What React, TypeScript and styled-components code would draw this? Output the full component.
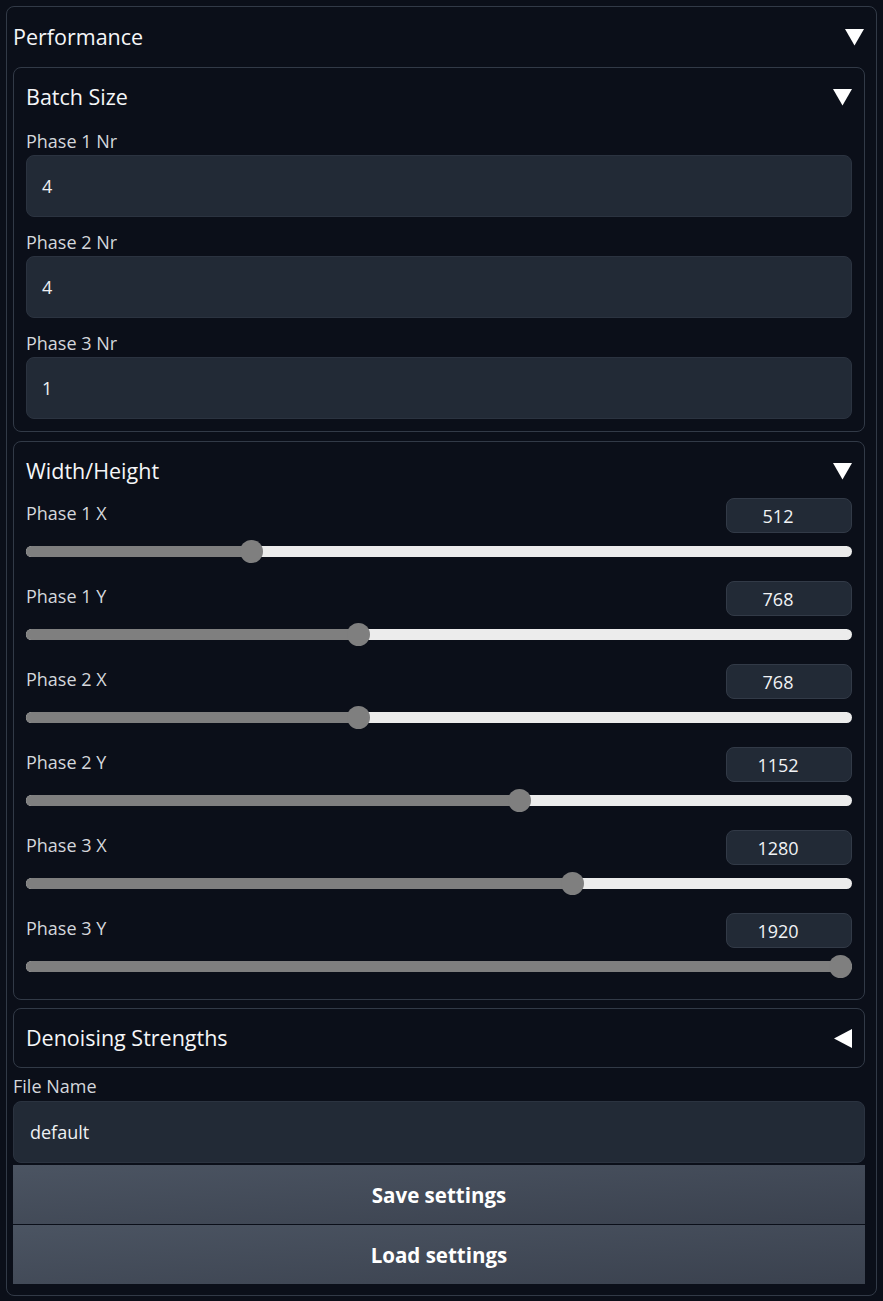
import React from "react";
import styled, { createGlobalStyle } from "styled-components";

const Global = createGlobalStyle`
  html, body { margin: 0; padding: 0; background: #0b0f19; }
  body { font-family: "Open Sans", "Noto Sans", sans-serif; color: #f3f4f6; }
  * { box-sizing: border-box; }
`;

const Page = styled.div`
  padding: 6px;
  width: 883px;
  height: 1301px;
  background: #0b0f19;
`;

const Outer = styled.div`
  border: 1px solid #323a47;
  border-radius: 8px;
  padding: 0 11px 11px 6px;
  display: flex;
  flex-direction: column;
`;

const OuterHeader = styled.div`
  height: 60px;
  display: flex;
  align-items: center;
  justify-content: space-between;
  padding-right: 1px;
`;

const Title = styled.span`
  font-size: 21.5px;
  line-height: 30px;
  color: #f5f6f8;
`;

const Block = styled.div<{ $padBottom?: number; $mt?: number }>`
  border: 1px solid #323a47;
  border-radius: 8px;
  padding: 12px 12px ${(p) => p.$padBottom ?? 12}px 12px;
  margin-top: ${(p) => p.$mt ?? 0}px;
  display: flex;
  flex-direction: column;
`;

const BlockHeader = styled.div<{ $mb?: number }>`
  height: 34px;
  display: flex;
  align-items: center;
  justify-content: space-between;
  margin-bottom: ${(p) => p.$mb ?? 0}px;
`;

const Field = styled.div<{ $mt?: number }>`
  display: flex;
  flex-direction: column;
  gap: 2px;
  margin-top: ${(p) => p.$mt ?? 0}px;
`;

const Label = styled.span`
  font-size: 18px;
  line-height: 24px;
  color: #d4d7dc;
`;

const TextBox = styled.div<{ $pad?: number }>`
  height: 62px;
  border-radius: 8px;
  background: #222a36;
  border: 1px solid #2b3340;
  display: flex;
  align-items: center;
  padding-left: ${(p) => p.$pad ?? 15}px;
  font-size: 18px;
  color: #eef0f3;
`;

const SliderRow = styled.div<{ $mt?: number }>`
  display: flex;
  flex-direction: column;
  margin-top: ${(p) => p.$mt ?? 0}px;
`;

const SliderHead = styled.div`
  height: 35px;
  display: flex;
  align-items: center;
  justify-content: space-between;
`;

const SliderLabel = styled(Label)`
  margin-top: -5px;
`;

const NumBox = styled.div`
  width: 126px;
  height: 35px;
  border-radius: 8px;
  background: #222a36;
  border: 1px solid #323a47;
  display: flex;
  align-items: center;
  justify-content: center;
  padding-right: 22px;
  font-size: 18px;
  color: #f1f3f5;
`;

const Track = styled.div`
  position: relative;
  height: 24px;
  margin-top: 6px;
  display: flex;
  align-items: center;
`;

const Rail = styled.div`
  position: relative;
  width: 100%;
  height: 11px;
  border-radius: 6px;
  background: #ececec;
  overflow: hidden;
`;

const Fill = styled.div`
  position: absolute;
  left: 0;
  top: 0;
  bottom: 0;
  background: #7f7f7f;
`;

const Thumb = styled.div`
  position: absolute;
  top: 0.5px;
  width: 23px;
  height: 23px;
  border-radius: 50%;
  background: #7f7f7f;
`;

const FileLabel = styled(Label)`
  margin-top: 6px;
`;

const FileField = styled.div`
  display: flex;
  flex-direction: column;
  gap: 3px;
`;

const Buttons = styled.div`
  margin-top: 2px;
  display: flex;
  flex-direction: column;
  gap: 1px;
`;

const Button = styled.button`
  height: 59px;
  border: none;
  border-radius: 0;
  background: linear-gradient(to bottom right, #4b5462, #3a414e);
  color: #ffffff;
  font-family: "Open Sans", "Noto Sans", sans-serif;
  font-weight: 700;
  font-size: 20.5px;
  cursor: pointer;
`;

const Tri = ({ dir }: { dir: "down" | "left" }) =>
  dir === "down" ? (
    <svg width="19" height="17" viewBox="0 0 19 17">
      <polygon points="0,0 19,0 9.5,16.5" fill="#ffffff" />
    </svg>
  ) : (
    <svg width="18" height="19" viewBox="0 0 18 19">
      <polygon points="18,0 18,19 0,9.5" fill="#ffffff" />
    </svg>
  );

const Slider = ({ label, value, max, mt }: { label: string; value: number; max: number; mt?: number }) => {
  const pct = value / max;
  return (
    <SliderRow $mt={mt}>
      <SliderHead>
        <SliderLabel>{label}</SliderLabel>
        <NumBox>{value}</NumBox>
      </SliderHead>
      <Track>
        <Rail>
          <Fill style={{ width: `calc(12px + ${pct} * (100% - 24px))` }} />
        </Rail>
        <Thumb style={{ left: `calc(0.5px + ${pct} * (100% - 24px))` }} />
      </Track>
    </SliderRow>
  );
};

const sliders = [
  { label: "Phase 1 X", value: 512 },
  { label: "Phase 1 Y", value: 768 },
  { label: "Phase 2 X", value: 768 },
  { label: "Phase 2 Y", value: 1152 },
  { label: "Phase 3 X", value: 1280 },
  { label: "Phase 3 Y", value: 1920 },
];

const fields = [
  { label: "Phase 1 Nr", value: "4" },
  { label: "Phase 2 Nr", value: "4" },
  { label: "Phase 3 Nr", value: "1" },
];

export default function App() {
  return (
    <Page>
      <Global />
      <Outer>
        <OuterHeader>
          <Title>Performance</Title>
          <Tri dir="down" />
        </OuterHeader>
        <Block>
          <BlockHeader $mb={15}>
            <Title>Batch Size</Title>
            <Tri dir="down" />
          </BlockHeader>
          {fields.map((f, i) => (
            <Field key={f.label} $mt={i === 0 ? 0 : 13}>
              <Label>{f.label}</Label>
              <TextBox>{f.value}</TextBox>
            </Field>
          ))}
        </Block>
        <Block $mt={9} $padBottom={21}>
          <BlockHeader $mb={10}>
            <Title>Width/Height</Title>
            <Tri dir="down" />
          </BlockHeader>
          {sliders.map((s, i) => (
            <Slider key={s.label} label={s.label} value={s.value} max={1920} mt={i === 0 ? 0 : 18} />
          ))}
        </Block>
        <Block $mt={8}>
          <BlockHeader>
            <Title>Denoising Strengths</Title>
            <Tri dir="left" />
          </BlockHeader>
        </Block>
        <FileField>
          <FileLabel>File Name</FileLabel>
          <TextBox $pad={16}>default</TextBox>
        </FileField>
        <Buttons>
          <Button>Save settings</Button>
          <Button>Load settings</Button>
        </Buttons>
      </Outer>
    </Page>
  );
}
